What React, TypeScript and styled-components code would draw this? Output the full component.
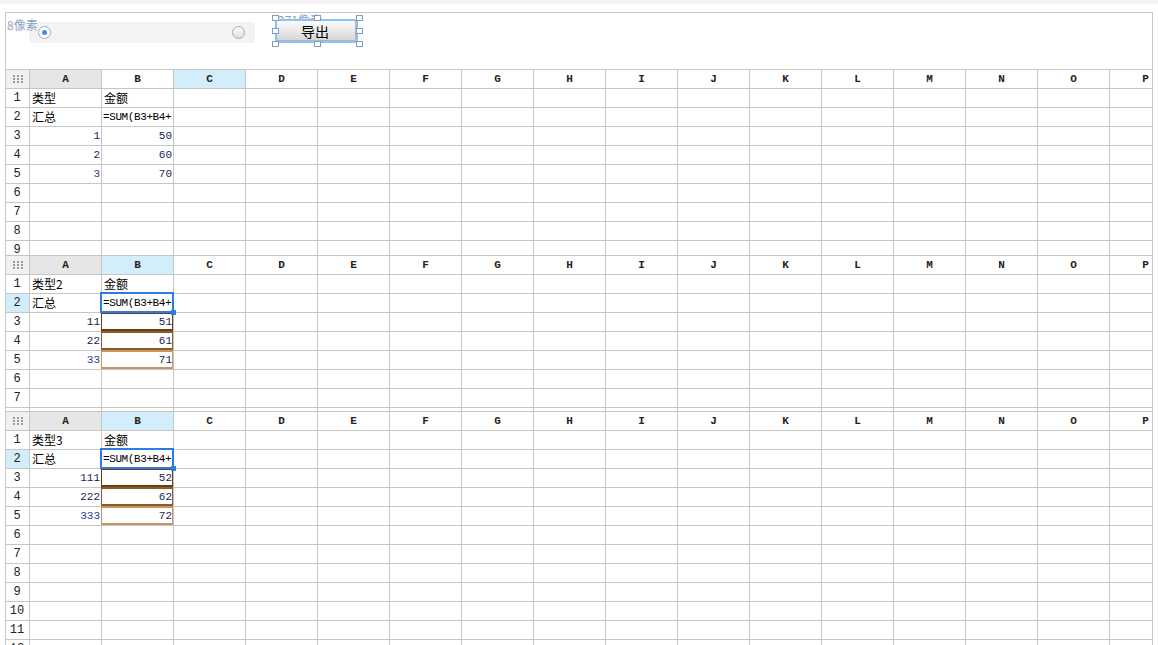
import React from 'react'
import styled, { createGlobalStyle, css } from 'styled-components'

const COLS = 'ABCDEFGHIJKLMNOP'.split('')

type CellData = { text: string; num?: boolean; formula?: boolean; color?: string }

type SheetInfo = {
  height?: number
  rows: number
  selCol: string
  selRow?: number
  active?: boolean
  data: Record<string, CellData>
}

const REF_COLORS: Record<number, string> = { 3: '#6b3e14', 4: '#8a5b2c', 5: '#c9955f' }

const makeData = (label: string, a: string[], b: string[]): Record<string, CellData> => ({
  A1: { text: label },
  B1: { text: '金额' },
  A2: { text: '汇总' },
  B2: { text: '=SUM(B3+B4+', formula: true },
  A3: { text: a[0], num: true },
  A4: { text: a[1], num: true },
  A5: { text: a[2], num: true, color: '#1f3c9a' },
  B3: { text: b[0], num: true },
  B4: { text: b[1], num: true },
  B5: { text: b[2], num: true },
})

const sheets: SheetInfo[] = [
  { height: 186, rows: 9, selCol: 'C', data: makeData('类型', ['1', '2', '3'], ['50', '60', '70']) },
  { height: 156, rows: 8, selCol: 'B', selRow: 2, active: true, data: makeData('类型2', ['11', '22', '33'], ['51', '61', '71']) },
  { rows: 12, selCol: 'B', selRow: 2, active: true, data: makeData('类型3', ['111', '222', '333'], ['52', '62', '72']) },
]

const handles = [
  [266, 2], [308, 2], [350, 2],
  [266, 15], [350, 15],
  [266, 28], [308, 28], [350, 28],
]

const GridDots = () => (
  <svg width="10" height="8" viewBox="0 0 10 8">
    {[0, 4, 8].map(x => [0, 3, 6].map(y => (
      <rect key={x + '-' + y} x={x} y={y} width="2" height="2" fill="#9b9b9b" />
    )))}
  </svg>
)

const Sheet = ({ info }: { info: SheetInfo }) => {
  const rowNums = Array.from({ length: info.rows }, (_, i) => i + 1)
  return (
    <SheetBox $h={info.height}>
      <Grid>
        <Corner><GridDots /></Corner>
        {COLS.map(c => (
          <ColHead key={c} $bg={c === 'A' ? '#e6e6e6' : c === info.selCol ? '#d2eefa' : '#fff'}>{c}</ColHead>
        ))}
        {rowNums.map(r => (
          <React.Fragment key={r}>
            <RowHead $sel={info.selRow === r}>{r}</RowHead>
            {COLS.map(c => {
              const d = info.data[c + r]
              const sel = info.active && c === 'B' && r === 2
              const refc = info.active && c === 'B' ? REF_COLORS[r] : undefined
              return (
                <Cell key={c} $sel={sel} $refc={refc}>
                  {d && (
                    d.formula ? <Formula>{d.text}</Formula>
                      : d.num ? <Num $color={d.color}>{d.text}</Num>
                        : <Text>{d.text}</Text>
                  )}
                </Cell>
              )
            })}
          </React.Fragment>
        ))}
      </Grid>
    </SheetBox>
  )
}

const App = () => {
  return (
    <>
      <GlobalStyle />
      <TopStrip />
      <Frame>
        <Toolbar>
          <RadioBar>
            <Radio $on />
            <Radio />
          </RadioBar>
          <Hint $x={1} $y={5}>8像素</Hint>
          <Hint $x={272} $y={0}>271像素</Hint>
          <SelBox>
            <ExportButton>导出</ExportButton>
          </SelBox>
          {handles.map(([x, y], i) => <Handle key={i} $x={x} $y={y} />)}
        </Toolbar>
        {sheets.map((s, i) => <Sheet key={i} info={s} />)}
      </Frame>
    </>
  )
}

export default App

const GlobalStyle = createGlobalStyle`
  html, body {
    margin: 0;
    padding: 0;
    background: #fff;
    overflow: hidden;
    font-family: "Noto Sans CJK SC", "Liberation Sans", sans-serif;
  }
  * { box-sizing: border-box; }
`

const TopStrip = styled.div`
  height: 4px;
  background: #f3f3f5;
`

const Frame = styled.div`
  margin: 8px 5px 0;
  border: 1px solid #c8c8c8;
  border-bottom: none;
  overflow: hidden;
  height: 640px;
`

const Toolbar = styled.div`
  position: relative;
  height: 57px;
  border-bottom: 1px solid #c8c8c8;
`

const Hint = styled.span<{ $x: number; $y: number }>`
  position: absolute;
  left: ${({ $x }) => $x}px;
  top: ${({ $y }) => $y}px;
  font-size: 12px;
  line-height: 14px;
  color: #8da2c2;
  white-space: nowrap;
`

const RadioBar = styled.div`
  position: absolute;
  left: 23px;
  top: 9px;
  width: 226px;
  height: 21px;
  background: #f3f3f5;
  border-radius: 2px;
  display: flex;
  align-items: center;
  justify-content: space-between;
  padding: 0 10px 0 9px;
`

const Radio = styled.span<{ $on?: boolean }>`
  width: 13px;
  height: 13px;
  border-radius: 50%;
  border: 1px solid #a9a9a9;
  background: ${({ $on }) => ($on ? '#fff' : 'linear-gradient(#fdfdfd, #dedede)')};
  display: flex;
  align-items: center;
  justify-content: center;

  &::after {
    content: '';
    width: 5px;
    height: 5px;
    border-radius: 50%;
    background: #3a8cf3;
    display: ${({ $on }) => ($on ? 'block' : 'none')};
  }
`

const SelBox = styled.div`
  position: absolute;
  left: 269px;
  top: 6px;
  width: 83px;
  height: 24px;
  border: 2px solid #8ec1f7;
  display: flex;
`

const ExportButton = styled.div`
  flex: 1;
  display: flex;
  align-items: center;
  justify-content: center;
  background: linear-gradient(#fbfbfb, #e9e9e9 55%, #d6d6d6);
  border-right: 1px solid #b5b5b5;
  border-bottom: 1px solid #b5b5b5;
  font-size: 14px;
  color: #000;
  padding-right: 2px;
`

const Handle = styled.span<{ $x: number; $y: number }>`
  position: absolute;
  left: ${({ $x }) => $x}px;
  top: ${({ $y }) => $y}px;
  width: 7px;
  height: 6px;
  background: #fff;
  border: 1px solid #7f9cc4;
`

const SheetBox = styled.div<{ $h?: number }>`
  ${({ $h }) => $h && css`height: ${$h}px;`}
  overflow: hidden;
  border-bottom: 1px solid #c6c6c6;
`

const Grid = styled.div`
  display: grid;
  grid-template-columns: 24px repeat(16, 72px);
  grid-auto-rows: 19px;
  width: 1176px;
`

const Corner = styled.div`
  border-right: 1px solid #c6c6c6;
  border-bottom: 1px solid #c6c6c6;
  background: #f1f1f1;
  display: flex;
  align-items: center;
  justify-content: center;
`

const ColHead = styled.div<{ $bg: string }>`
  border-right: 1px solid #c6c6c6;
  border-bottom: 1px solid #c6c6c6;
  background: ${({ $bg }) => $bg};
  font-family: "Liberation Mono", "DejaVu Sans Mono", monospace;
  font-size: 11px;
  font-weight: bold;
  color: #222;
  display: flex;
  align-items: center;
  justify-content: center;
`

const RowHead = styled.div<{ $sel?: boolean }>`
  border-right: 1px solid #c6c6c6;
  border-bottom: 1px solid #c6c6c6;
  background: ${({ $sel }) => ($sel ? '#d2eefa' : '#fff')};
  font-family: "Liberation Mono", "DejaVu Sans Mono", monospace;
  font-size: 12px;
  color: #222;
  display: flex;
  align-items: center;
  justify-content: center;
  padding-right: 1px;
`

const Cell = styled.div<{ $sel?: boolean; $refc?: string }>`
  position: relative;
  border-right: 1px solid #c6c6c6;
  border-bottom: 1px solid #c6c6c6;
  background: #fff;
  min-width: 0;

  ${({ $refc }) => $refc && css`
    &::after {
      content: '';
      position: absolute;
      top: -1px;
      left: -1px;
      right: 0;
      bottom: 0;
      border-style: solid;
      border-color: ${$refc};
      border-width: 2px 1px;
      z-index: 2;
      pointer-events: none;
    }
  `}

  ${({ $sel }) => $sel && css`
    &::after {
      content: '';
      position: absolute;
      top: -2px;
      left: -2px;
      right: -1px;
      bottom: -1px;
      border: 2px solid #2b7de2;
      z-index: 3;
      pointer-events: none;
    }
    &::before {
      content: '';
      position: absolute;
      right: -3px;
      bottom: -3px;
      width: 5px;
      height: 5px;
      background: #2b7de2;
      z-index: 4;
    }
  `}
`

const Text = styled.span`
  display: block;
  padding: 0 2px;
  font-size: 12px;
  line-height: 18px;
  color: #000;
  white-space: nowrap;
  overflow: hidden;
`

const Formula = styled.span`
  display: block;
  padding: 0 1px;
  font-family: "Liberation Mono", "DejaVu Sans Mono", monospace;
  font-size: 11px;
  letter-spacing: -0.4px;
  line-height: 18px;
  color: #000;
  white-space: nowrap;
  overflow: hidden;
`

const Num = styled.span<{ $color?: string }>`
  display: block;
  text-align: right;
  padding-right: 1px;
  font-family: "Liberation Mono", "DejaVu Sans Mono", monospace;
  font-size: 11px;
  line-height: 18px;
  color: ${({ $color }) => $color || '#1b2450'};
`
